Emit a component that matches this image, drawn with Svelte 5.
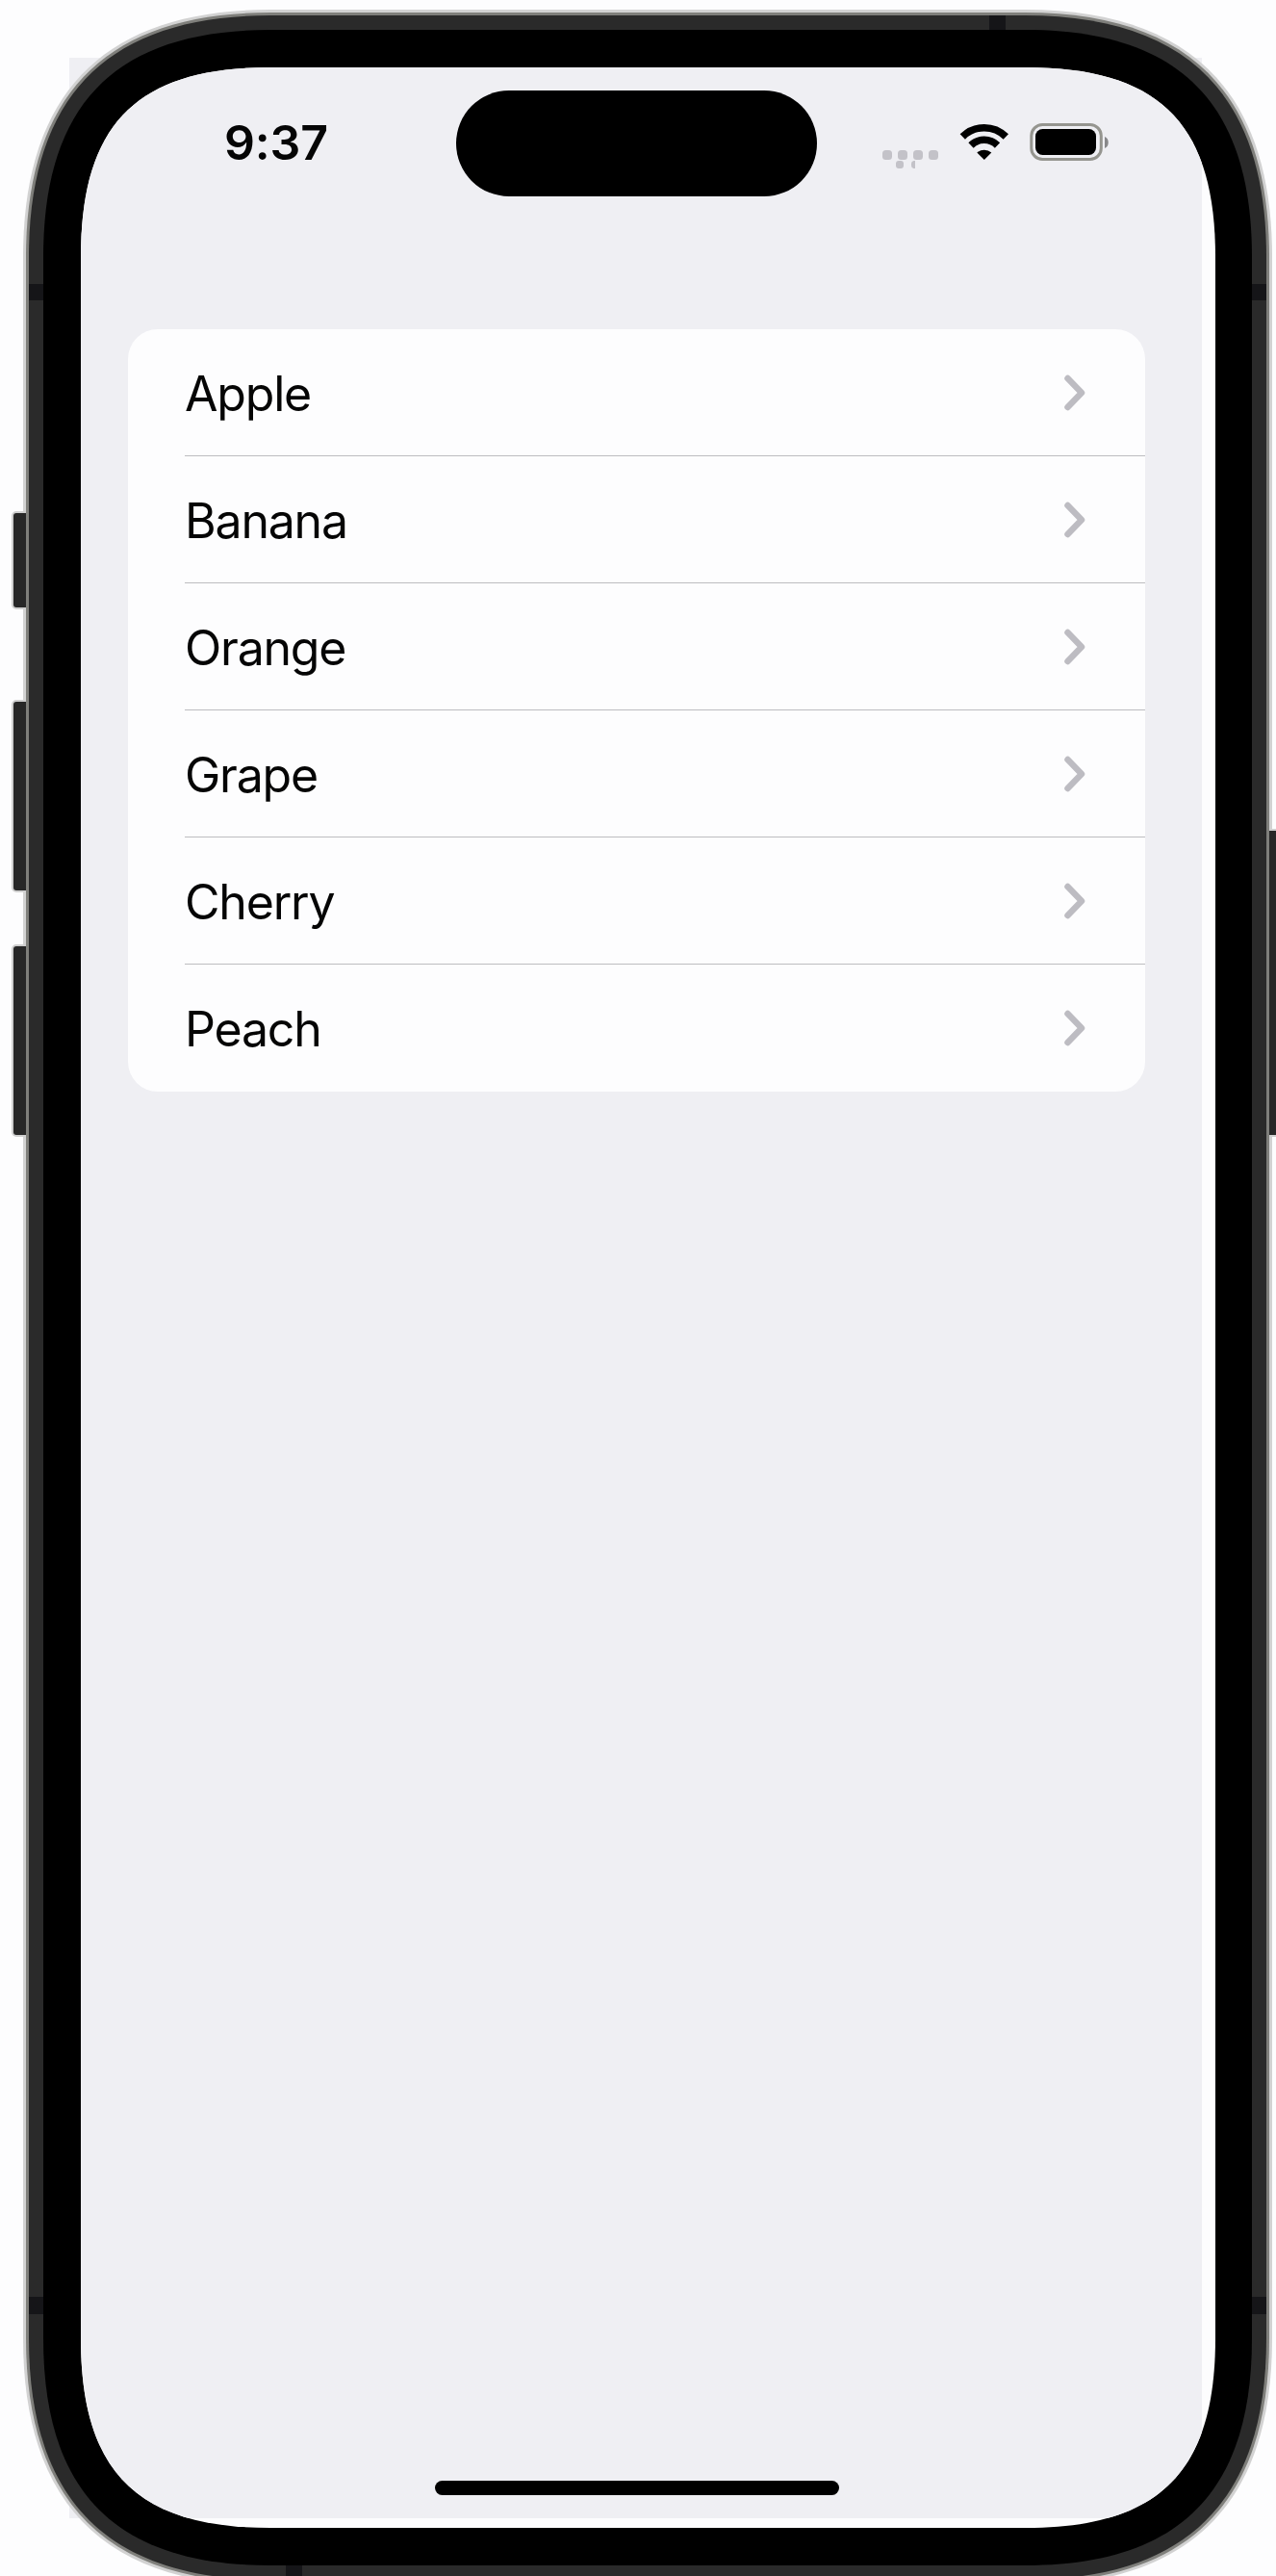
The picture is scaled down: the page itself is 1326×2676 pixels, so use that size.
<script>
  const fruits = ['Apple', 'Banana', 'Orange', 'Grape', 'Cherry', 'Peach'];

  // Screen outline grown outwards by `o`, with soft continuous corners.
  function outline(o) {
    const x = 84 - o, y = 70 - o, R = 1263 + Math.max(o - 1, 0), B = 2626 + o;
    const L = 197 + o;
    const q = (L * ((8 * (46.5 + 0.293 * o)) / L - 1)) / 3;
    return `M${x + L} ${y}H${R - L}C${R - q} ${y} ${R} ${y + q} ${R} ${y + L}` +
      `V${B - L}C${R} ${B - q} ${R - q} ${B} ${R - L} ${B}` +
      `H${x + L}C${x + q} ${B} ${x} ${B - q} ${x} ${B - L}` +
      `V${y + L}C${x} ${y + q} ${x + q} ${y} ${x + L} ${y}Z`;
  }

  const screen = outline(0);
  const rings = [
    { d: outline(60), fill: '#d2d2d2' },
    { d: outline(57), fill: '#7f7f7b' },
    { d: outline(54), fill: '#2a2a2a' }
  ];
  const bands = [
    [30, 295, 15, 17], [1301, 295, 15, 17],
    [30, 2386, 15, 18], [1301, 2386, 15, 18],
    [1028, 16, 17, 15], [297, 2665, 17, 11]
  ];
  const buttons = [
    [14, 533, 18, 98], [14, 729, 18, 196], [14, 983, 18, 196], [1316, 863, 18, 316]
  ];
</script>

<div class="stage">
  <svg class="device" width="1326" height="2676" viewBox="0 0 1326 2676">
    <defs><clipPath id="glass"><path d={screen} /></clipPath></defs>
    <rect x="72" y="60" width="1177" height="2556" fill="#efeff3" />
    <path d={rings[0].d} fill={rings[0].fill} />
    {#each buttons as [x, y, w, h]}
      <rect {x} {y} width={w} height={h} rx="3" fill="#272727" stroke="#cfcfcf" stroke-width="4" paint-order="stroke" />
    {/each}
    {#each rings.slice(1) as ring}
      <path d={ring.d} fill={ring.fill} />
    {/each}
    {#each bands as [x, y, w, h]}
      <rect {x} {y} width={w} height={h} fill="#151518" />
    {/each}
    <path d={outline(39)} fill="#000" />
    <path d={screen} fill="#fdfdfe" />
    <rect x="72" y="60" width="1177" height="2556" fill="#efeff3" clip-path="url(#glass)" />
  </svg>

  <main class="screen">
    <header class="status">
      <time>9:37</time>
      <div class="island"></div>
      <svg class="indicators" width="240" height="50" viewBox="0 0 240 50">
        <g fill="#c3c2c8">
          <rect x="2" y="31" width="10" height="10" rx="3.5" />
          <rect x="18" y="31" width="10" height="10" rx="3.5" />
          <rect x="34" y="31" width="10" height="10" rx="3.5" />
          <rect x="50" y="31" width="10" height="10" rx="3.5" />
          <rect x="16" y="42" width="8" height="8" rx="3" />
          <path d="M36 42h-1.500a3 3 0 0 0-2.500 3v2a3 3 0 0 0 2.500 3h1.500z" />
        </g>
        <g fill="none" stroke="#000" stroke-width="7.500">
          <path d="M85.300 17a31.800 31.800 0 0 1 45 0" />
          <path d="M94 26a19.500 19.500 0 0 1 27.500 0" />
        </g>
        <path d="M100.300 33.500a11.500 11.500 0 0 1 15 0l-7.500 7.500z" />
        <rect x="156.800" y="4.500" width="72.500" height="36" rx="11.500" fill="none" stroke="#95958f" stroke-width="3" />
        <rect x="161" y="9" width="63" height="27" rx="7.500" />
        <path d="M233 17c5 1.500 5 10.500 0 12z" fill="#88888a" />
      </svg>
    </header>

    <ul class="list">
      {#each fruits as fruit}
        <li>
          <div class="row">
            <span>{fruit}</span>
            <svg width="24" height="40" viewBox="0 0 24 40"><path d="M4.500 5 19 20 4.500 35" /></svg>
          </div>
        </li>
      {/each}
    </ul>

    <div class="home"></div>
  </main>
</div>

<style>
  :global(body) {
    background: #fdfdfe;
  }
  .stage {
    display: grid;
    width: 1326px;
    height: 2676px;
    overflow: hidden;
    font-family: Inter, "Liberation Sans", sans-serif;
    color: #050505;
  }
  .device,
  .screen {
    grid-area: 1 / 1;
  }
  .device {
    display: block;
  }
  .screen {
    margin: 70px 87px 50px 84px;
    display: flex;
    flex-direction: column;
    align-items: center;
  }
  .status {
    box-sizing: border-box;
    width: 100%;
    height: 272px;
    padding-top: 24px;
    display: grid;
    grid-template-columns: 389.5px 375px 1fr;
    align-items: start;
  }
  time {
    padding: 23.5px 0 0 149px;
    font-size: 50px;
    line-height: 60px;
    font-weight: 580;
    letter-spacing: -0.2px;
  }
  .island {
    height: 110px;
    border-radius: 55px;
    background: #000;
  }
  .indicators {
    margin: 31px 0 0 66.5px;
  }
  .list {
    list-style: none;
    margin: 0;
    padding: 0;
    width: 1057px;
    height: 792px;
    border-radius: 31px;
    background: #fdfdfe;
    display: grid;
    grid-template-rows: repeat(6, 1fr);
  }
  li {
    padding-left: 59px;
    display: flex;
  }
  .row {
    box-sizing: border-box;
    flex: 1;
    display: flex;
    align-items: center;
    justify-content: space-between;
    padding-right: 61px;
    border-bottom: 1px solid #bdbdc0;
  }
  li:last-child .row {
    border-bottom-color: transparent;
  }
  .row span {
    font-size: 50px;
    line-height: 60px;
    padding-top: 2px;
    letter-spacing: -1.2px;
  }
  .row path {
    fill: none;
    stroke: #bdbcc2;
    stroke-width: 6.500;
    stroke-linecap: round;
    stroke-linejoin: round;
  }
  .home {
    width: 420px;
    height: 15px;
    margin: auto 0 34px;
    border-radius: 8px;
    background: #000;
  }
</style>
